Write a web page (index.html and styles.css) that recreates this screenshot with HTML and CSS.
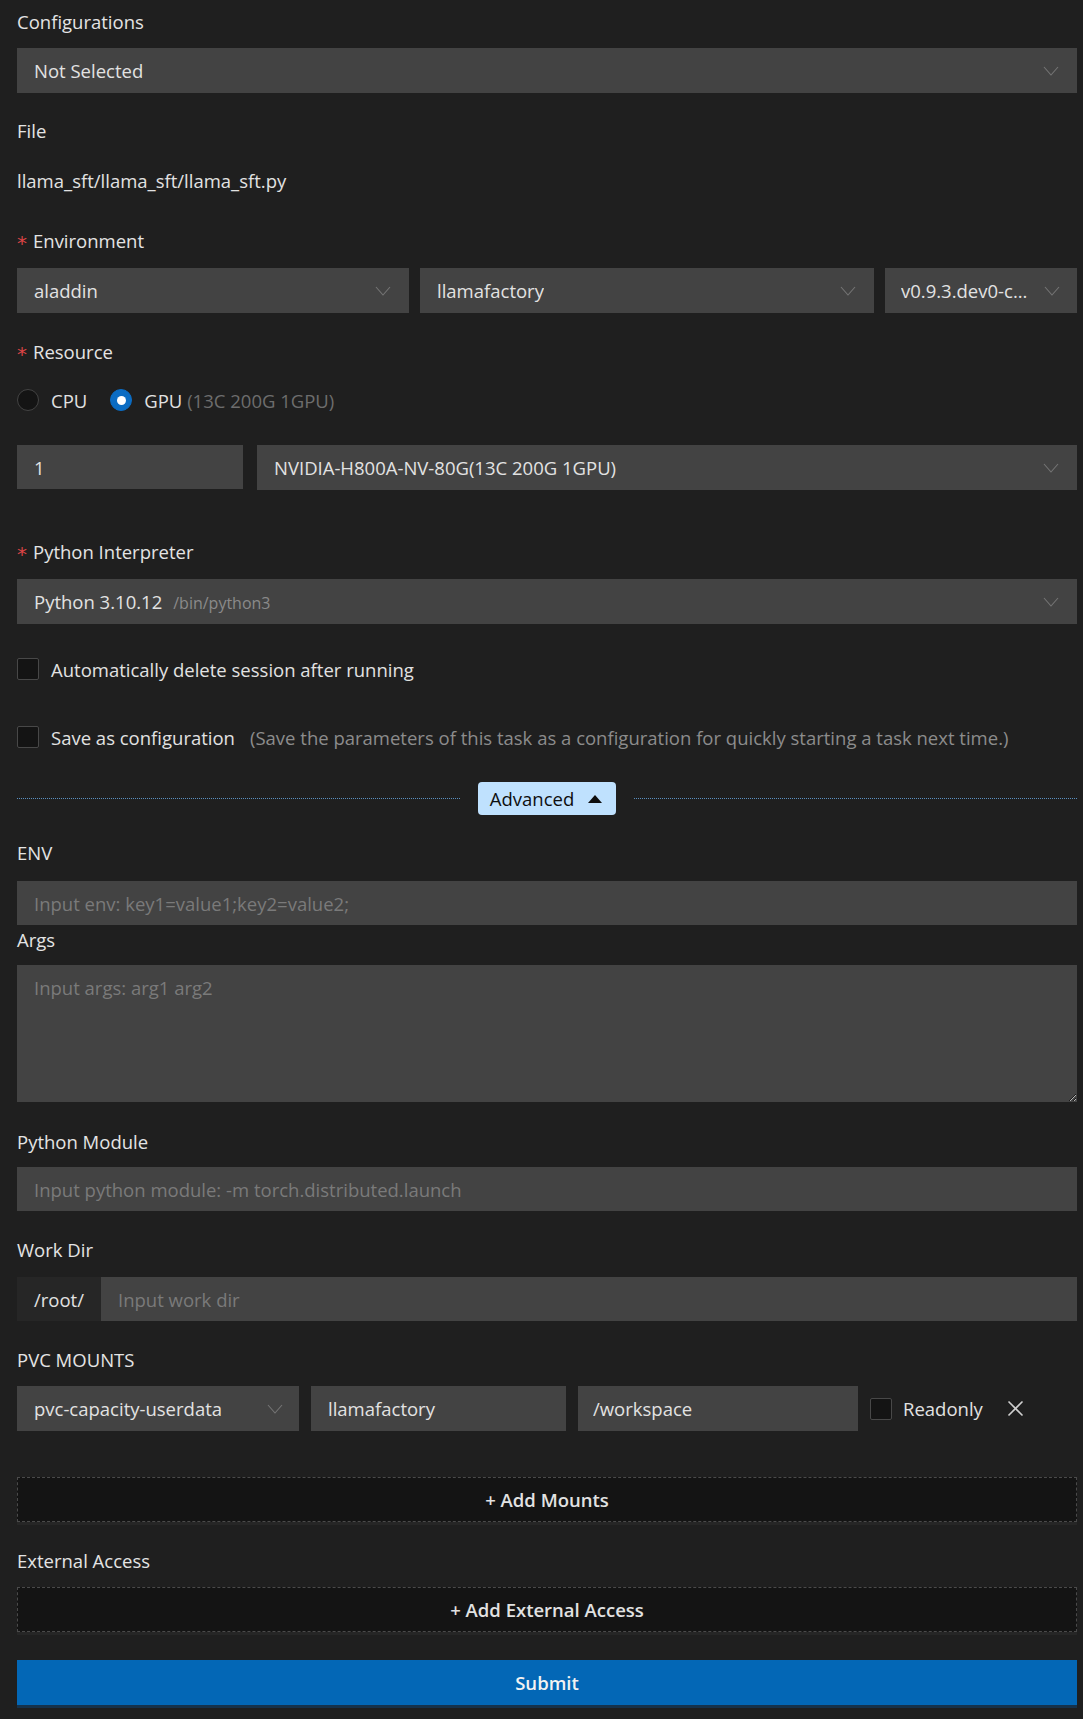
FILE: index.html
```html
<!DOCTYPE html>
<html lang="en">
<head>
<meta charset="utf-8">
<title>Run configuration</title>
<link rel="stylesheet" href="styles.css">
</head>
<body>
<form class="form">
  <div class="item item-config">
    <div class="label">Configurations</div>
    <div class="select"><span class="value">Not Selected</span><svg class="chev" viewBox="0 0 16 10"><polyline points="1,1 8,9 15,1"/></svg></div>
  </div>

  <div class="item item-file">
    <div class="label label-file">File</div>
    <div class="text-line">llama_sft/llama_sft/llama_sft.py</div>
  </div>

  <div class="item">
    <div class="label label-tight"><span class="req">*</span>Environment</div>
    <div class="env-row">
      <div class="select"><span class="value">aladdin</span><svg class="chev" viewBox="0 0 16 10"><polyline points="1,1 8,9 15,1"/></svg></div>
      <div class="select"><span class="value">llamafactory</span><svg class="chev" viewBox="0 0 16 10"><polyline points="1,1 8,9 15,1"/></svg></div>
      <div class="select select-narrow"><span class="value">v0.9.3.dev0-c...</span><svg class="chev" viewBox="0 0 16 10"><polyline points="1,1 8,9 15,1"/></svg></div>
    </div>
  </div>

  <div class="item item-resource">
    <div class="label label-radio"><span class="req">*</span>Resource</div>
    <div class="radios">
      <label class="radio"><span class="radio-dot"></span><span>CPU</span></label>
      <label class="radio"><span class="radio-dot checked"></span><span>GPU <span class="muted">(13C 200G 1GPU)</span></span></label>
    </div>
    <div class="gpu-row">
      <input class="input" type="text" value="1">
      <div class="select"><span class="value">NVIDIA-H800A-NV-80G(13C 200G 1GPU)</span><svg class="chev" viewBox="0 0 16 10"><polyline points="1,1 8,9 15,1"/></svg></div>
    </div>
  </div>

  <div class="item item-python">
    <div class="label label-tight"><span class="req">*</span>Python Interpreter</div>
    <div class="select"><span class="value">Python 3.10.12<span class="path">/bin/python3</span></span><svg class="chev" viewBox="0 0 16 10"><polyline points="1,1 8,9 15,1"/></svg></div>
  </div>

  <div class="check-row check-auto">
    <span class="checkbox"></span><span>Automatically delete session after running</span>
  </div>

  <div class="check-row check-save">
    <span class="checkbox"></span><span>Save as configuration</span><span class="hint">(Save the parameters of this task as a configuration for quickly starting a task next time.)</span>
  </div>

  <div class="divider">
    <span class="divider-line"></span>
    <button type="button" class="advanced">Advanced<svg class="tri" viewBox="0 0 14 8"><polygon points="0,8 7,0 14,8"/></svg></button>
    <span class="divider-line"></span>
  </div>

  <div class="item item-env">
    <div class="label label-env">ENV</div>
    <input class="input" type="text" placeholder="Input env: key1=value1;key2=value2;">
  </div>

  <div class="item item-args">
    <div class="label label-args">Args</div>
    <textarea class="textarea" placeholder="Input args: arg1 arg2"></textarea>
  </div>

  <div class="item">
    <div class="label label-module">Python Module</div>
    <input class="input" type="text" placeholder="Input python module: -m torch.distributed.launch">
  </div>

  <div class="item">
    <div class="label label-tight">Work Dir</div>
    <div class="workdir">
      <span class="addon">/root/</span>
      <input class="input" type="text" placeholder="Input work dir">
    </div>
  </div>

  <div class="item item-pvc">
    <div class="label">PVC MOUNTS</div>
    <div class="pvc-row">
      <div class="select pvc-select"><span class="value">pvc-capacity-userdata</span><svg class="chev" viewBox="0 0 16 10"><polyline points="1,1 8,9 15,1"/></svg></div>
      <input class="input pvc-name" type="text" value="llamafactory">
      <input class="input pvc-path" type="text" value="/workspace">
      <label class="readonly"><span class="checkbox"></span>Readonly</label>
      <svg class="close" viewBox="0 0 17 17"><line x1="1.5" y1="1.5" x2="15.5" y2="15.5"/><line x1="15.5" y1="1.5" x2="1.5" y2="15.5"/></svg>
    </div>
  </div>

  <button type="button" class="dashed dashed-mounts">+ Add Mounts</button>

  <div class="item item-external">
    <div class="label">External Access</div>
    <button type="button" class="dashed">+ Add External Access</button>
  </div>

  <button type="submit" class="submit">Submit</button>
</form>
</body>
</html>
```

FILE: styles.css
```css
* {
  box-sizing: border-box;
}

html,
body {
  margin: 0;
  background: #1f1f1f;
}

body {
  font-family: "Open Sans", "Noto Sans", sans-serif;
  font-size: 18.5px;
  color: #e2e2e2;
}

.form {
  display: flex;
  flex-direction: column;
  padding: 7px 6px 14px 17px;
}

.item {
  display: flex;
  flex-direction: column;
  margin-bottom: 24px;
}

.label {
  height: 30px;
  line-height: 30px;
  margin-bottom: 11px;
  white-space: nowrap;
  color: #e4e4e4;
}

.label-tight {
  margin-bottom: 12px;
}

.label-file {
  margin-bottom: 20px;
}

.label-radio {
  margin-bottom: 18px;
}

.label-env {
  margin-bottom: 13px;
}

.label-args {
  margin-bottom: 10px;
}

.label-module {
  margin-bottom: 10px;
}

.req {
  display: inline-block;
  width: 16px;
  color: #dc4446;
  font-family: "DejaVu Sans", sans-serif;
  font-size: 20px;
  position: relative;
  top: 2px;
}

.item-config {
  margin-bottom: 23px;
}

.item-file {
  margin-bottom: 30px;
}

.item-python {
  margin-bottom: 30px;
}

.item-resource {
  margin-bottom: 47px;
}

.item-env {
  margin-bottom: 0;
}

.item-args {
  margin-bottom: 25px;
}

.item-pvc {
  margin-bottom: 46px;
}

.item-external {
  margin-bottom: 28px;
}

.text-line {
  height: 30px;
  line-height: 30px;
}

.select {
  height: 45px;
  background: #434343;
  display: flex;
  align-items: center;
  justify-content: space-between;
  padding: 0 18px 0 17px;
  min-width: 0;
}

.select .value {
  white-space: nowrap;
  overflow: hidden;
  color: #e2e2e2;
}

.chev {
  width: 16px;
  height: 10px;
  flex: 0 0 16px;
  margin-left: 10px;
}

.chev polyline {
  fill: none;
  stroke: #747474;
  stroke-width: 1.1;
}

.path {
  margin-left: 11px;
  font-size: 16px;
  color: #8a8a8a;
}

.env-row {
  display: grid;
  grid-template-columns: 392px 454px 1fr;
  column-gap: 11px;
}

.select-narrow {
  padding-left: 16px;
  padding-right: 17px;
}

.radios {
  display: flex;
  align-items: center;
  gap: 23px;
  height: 30px;
  margin-bottom: 30px;
}

.radio {
  display: flex;
  align-items: center;
  gap: 12px;
  white-space: nowrap;
}

.radio-dot {
  width: 22px;
  height: 22px;
  border-radius: 50%;
  border: 1px solid #434343;
  background: #141414;
  display: flex;
  align-items: center;
  justify-content: center;
}

.radio-dot.checked {
  background: #0b6cc3;
  border-color: #0b6cc3;
}

.radio-dot.checked::after {
  content: "";
  width: 9px;
  height: 9px;
  border-radius: 50%;
  background: #ffffff;
}

.muted {
  color: #6d6d6d;
  font-size: 18.5px;
}

.gpu-row {
  display: grid;
  grid-template-columns: 226px 1fr;
  column-gap: 14px;
}

.input {
  display: block;
  width: 100%;
  height: 44px;
  background: #434343;
  border: none;
  outline: none;
  padding: 0 17px;
  font: inherit;
  color: #e2e2e2;
  min-width: 0;
}

.input::placeholder,
.textarea::placeholder {
  color: #7a7a7a;
}

.check-row {
  display: flex;
  align-items: center;
  height: 30px;
  gap: 12px;
  white-space: nowrap;
}

.check-auto {
  margin-bottom: 38px;
}

.check-save {
  margin-bottom: 30px;
}

.checkbox {
  width: 22px;
  height: 22px;
  flex: 0 0 22px;
  background: #141414;
  border: 1px solid #484848;
  border-radius: 2px;
}

.hint {
  margin-left: 3px;
  color: #8c8c8c;
}

.divider {
  display: flex;
  align-items: center;
  gap: 18px;
  margin-bottom: 23px;
}

.divider-line {
  flex: 1;
  border-top: 1px dotted #5a8fc0;
}

.advanced {
  display: flex;
  align-items: center;
  gap: 14px;
  height: 33px;
  padding: 0 14px 0 12px;
  border: none;
  border-radius: 4px;
  background: #bfe1fe;
  color: #0e0e0e;
  font: inherit;
}

.tri {
  width: 14px;
  height: 8px;
}

.tri polygon {
  fill: #0e0e0e;
}

.textarea {
  display: block;
  width: 100%;
  height: 137px;
  background: #434343;
  border: none;
  outline: none;
  padding: 8px 17px;
  font: inherit;
  line-height: 30px;
  color: #e2e2e2;
  resize: vertical;
}

.workdir {
  display: flex;
  height: 44px;
}

.addon {
  flex: 0 0 84px;
  display: flex;
  align-items: center;
  padding-left: 17px;
  background: #262626;
  color: #e2e2e2;
}

.workdir .input {
  flex: 1;
}

.pvc-row {
  display: flex;
  align-items: center;
  height: 45px;
}

.pvc-select {
  flex: 0 0 282px;
  padding-right: 16px;
}

.pvc-name {
  flex: 0 0 255px;
  width: 255px;
  height: 45px;
  margin-left: 12px;
}

.pvc-path {
  flex: 0 0 280px;
  width: 280px;
  height: 45px;
  margin-left: 12px;
  padding-left: 15px;
}

.readonly {
  display: flex;
  align-items: center;
  gap: 11px;
  margin-left: 12px;
}

.close {
  width: 17px;
  height: 17px;
  margin-left: 24px;
}

.close line {
  stroke: #d0d0d0;
  stroke-width: 1.6;
}

.dashed {
  display: block;
  width: 100%;
  height: 45px;
  background: #141414;
  border: 1px dashed #4a4a4a;
  box-shadow: 0 3px 0 #262626;
  color: #e2e2e2;
  font: inherit;
  font-weight: 600;
}

.dashed-mounts {
  margin-bottom: 24px;
}

.submit {
  display: block;
  width: 100%;
  height: 45px;
  background: #0367b6;
  border: none;
  box-shadow: 0 3px 0 #16324b;
  color: #f2f2f2;
  font: inherit;
  font-weight: 600;
}
```
